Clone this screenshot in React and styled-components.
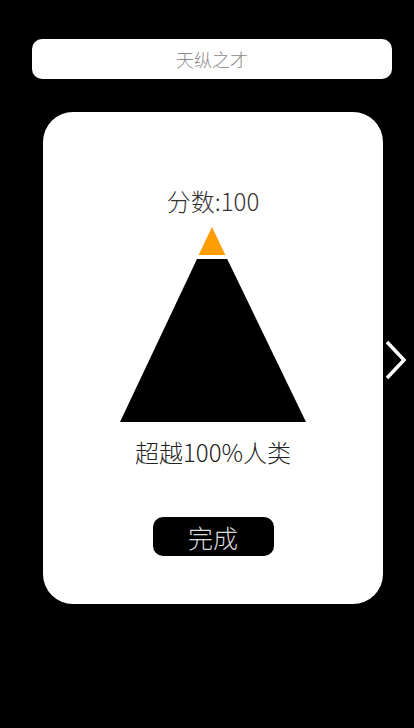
import React from 'react';
import styled, { createGlobalStyle } from 'styled-components';

const GlobalStyle = createGlobalStyle`
  html, body {
    margin: 0;
    padding: 0;
    background: #000000;
  }

  body {
    font-family: "Noto Sans CJK SC", "Noto Sans", sans-serif;
  }
`;

const Page = styled.div`
  background: #000000;
  display: flex;
  flex-direction: column;
  min-height: 728px;
  padding-top: 39px;
  box-sizing: border-box;
`;

const TitleBar = styled.div`
  align-items: center;
  background: #ffffff;
  border-radius: 10px;
  color: #8a8a8a;
  display: flex;
  font-size: 18px;
  font-weight: 300;
  height: 40px;
  justify-content: center;
  margin-left: 32px;
  width: 360px;
`;

const Row = styled.div`
  align-items: center;
  display: flex;
  gap: 1px;
  margin-left: 43px;
  margin-top: 33px;
`;

const Card = styled.div`
  align-items: center;
  background: #ffffff;
  border-radius: 30px;
  box-sizing: border-box;
  display: flex;
  flex-direction: column;
  height: 492px;
  padding-top: 74px;
  width: 340px;
`;

const Score = styled.div`
  color: #333333;
  font-size: 24px;
  font-weight: 300;
  line-height: 30px;
  margin-bottom: 11px;
`;

const Rank = styled.div`
  color: #222222;
  font-size: 24px;
  font-weight: 300;
  line-height: 32px;
  margin-top: 14px;
`;

const DoneButton = styled.button`
  background: #000000;
  border: none;
  border-radius: 10px;
  color: #dddddd;
  cursor: pointer;
  font-family: inherit;
  font-size: 25px;
  font-weight: 300;
  height: 39px;
  margin-top: 49px;
  padding: 0;
  width: 121px;

  &:focus {
    outline: none;
  }
`;

const Next = styled.svg`
  margin-top: 4px;
`;

const Pyramid = () => (
  <svg width="186" height="195" viewBox="0 0 186 195">
    <polygon points="92,0 105.4,28 78.6,28" fill="#ff9c00" />
    <polygon points="77,32 107.2,32 186,195 0,195" fill="#000000" />
  </svg>
);

export default function App() {
  return (
    <Page>
      <GlobalStyle />
      <TitleBar>天纵之才</TitleBar>
      <Row>
        <Card>
          <Score>分数:100</Score>
          <Pyramid />
          <Rank>超越100%人类</Rank>
          <DoneButton>完成</DoneButton>
        </Card>
        <Next width="24" height="40" viewBox="0 0 24 40">
          <polyline
            points="3,2 20,20 3,38"
            fill="none"
            stroke="#ffffff"
            strokeWidth="3.5"
            strokeLinejoin="miter"
          />
        </Next>
      </Row>
    </Page>
  );
}
